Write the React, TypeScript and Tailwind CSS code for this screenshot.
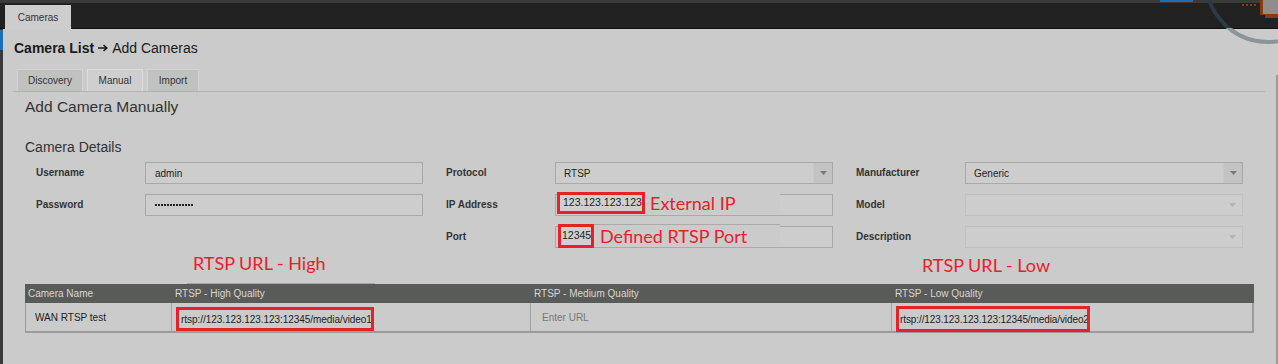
import React from "react";

function Arrow({ disabled }: { disabled?: boolean }) {
  return (
    <svg width="7" height="4" viewBox="0 0 7 4">
      <polygon points="0,0 7,0 3.5,4" fill={disabled ? "#b4b4b4" : "#7a7a7a"} />
    </svg>
  );
}

function Input({ value }: { value?: React.ReactNode }) {
  return (
    <div className="w-[278px] h-[22px] border border-[#a9a9a9] bg-[#cdcdcd] flex items-center pl-[9px] text-[10px] text-[#222]">
      {value}
    </div>
  );
}

function Select({ value, disabled }: { value?: string; disabled?: boolean }) {
  return (
    <div
      className={
        disabled
          ? "w-[278px] h-[22px] border border-[#c1c1c1] bg-[#cdcdcd] flex items-stretch"
          : "w-[278px] h-[22px] border border-[#a9a9a9] bg-[#cdcdcd] flex items-stretch"
      }
    >
      <div className="flex-1 flex items-center pl-[8px] text-[10px] text-[#222]">{value}</div>
      <div
        className={
          disabled
            ? "w-[19px] flex items-center justify-center"
            : "w-[19px] flex items-center justify-center bg-[#c3c3c3] border-l border-[#c9c9c9]"
        }
      >
        <Arrow disabled={disabled} />
      </div>
    </div>
  );
}

function Row({ label, children }: { label: string; children: React.ReactNode }) {
  return (
    <div className="flex items-center h-[22px]">
      <div className="w-[109px] text-[10px] font-bold text-[#333] -mt-[2px]">{label}</div>
      {children}
    </div>
  );
}

function Dots() {
  return (
    <div className="flex gap-[1px]">
      {Array.from({ length: 13 }).map((_, i) => (
        <div key={i} className="w-[2px] h-[2px] bg-[#222]" />
      ))}
    </div>
  );
}

function TitleArrow() {
  return (
    <svg width="10" height="8" viewBox="0 0 10 8" className="inline-block mx-[4px] align-[1px]">
      <path d="M0 4 H8.5 M5.5 1 L8.8 4 L5.5 7" fill="none" stroke="#1a1a1a" strokeWidth="1.6" />
    </svg>
  );
}

const note = "font-['Lato',sans-serif] text-[18px] leading-[20px] text-[#e8202a]";

export default function App() {
  return (
    <div className="relative w-[1278px] h-[364px] overflow-hidden bg-[#cbcbcb] font-['Liberation_Sans',Arial,sans-serif] text-[#222]">
      {/* top bar */}
      <div className="h-[29px] bg-[#212121] border-t-[3px] border-t-[#3a3a3a] border-b border-b-[#111111] flex items-end pl-[5px]">
        <div className="w-[66px] h-[24px] -mb-px bg-[#cdcdcd] text-[10px] text-[#333] flex items-center justify-center">
          Cameras
        </div>
      </div>

      <div className="flex h-[335px]">
        <div className="w-[3px] bg-[#3a3a3a] flex flex-col">
          <div className="mt-[1px] h-[20px] bg-[#1d6fb5]" />
        </div>

        <div className="flex-1 flex flex-col">
          {/* title */}
          <div className="mt-[11px] pl-[11px] text-[14px] leading-[16px] text-[#1a1a1a]">
            <span className="font-bold">Camera List</span>
            <TitleArrow />
            Add Cameras
          </div>

          {/* sub tabs */}
          <div className="mt-[13px] ml-[10px] mr-[11px] border-b border-[#b3b3b3] flex gap-[4px] pl-[4px]">
            <div className="w-[66px] h-[22px] bg-[#c0c2c0] border border-b-0 border-[#d3d3d3] text-[10px] text-[#333] flex items-center justify-center">
              Discovery
            </div>
            <div className="w-[56px] h-[22px] bg-[#cfcfcf] border border-b-0 border-[#dcdcdc] text-[10px] text-[#333] flex items-center justify-center">
              Manual
            </div>
            <div className="w-[52px] h-[22px] bg-[#c0c2c0] border border-b-0 border-[#d3d3d3] text-[10px] text-[#333] flex items-center justify-center">
              Import
            </div>
          </div>

          <div className="mt-[6px] pl-[22px] text-[15.5px] leading-[18px] text-[#333]">Add Camera Manually</div>
          <div className="mt-[23px] pl-[22px] text-[14px] leading-[16px] text-[#333]">Camera Details</div>

          {/* form */}
          <div className="mt-[7px] pl-[33px] flex gap-[23px]">
            <div className="flex flex-col gap-[10px]">
              <Row label="Username">
                <Input value="admin" />
              </Row>
              <Row label="Password">
                <Input value={<Dots />} />
              </Row>
            </div>
            <div className="flex flex-col gap-[10px]">
              <Row label="Protocol">
                <Select value="RTSP" />
              </Row>
              <Row label="IP Address">
                <Input />
              </Row>
              <Row label="Port">
                <Input />
              </Row>
            </div>
            <div className="flex flex-col gap-[10px]">
              <Row label="Manufacturer">
                <Select value="Generic" />
              </Row>
              <Row label="Model">
                <Select disabled />
              </Row>
              <Row label="Description">
                <Select disabled />
              </Row>
            </div>
          </div>

          {/* table */}
          <div className="mt-[36px] ml-[22px] w-[1229px]">
            <div className="flex h-[19px] bg-[#595b59] text-[10px] text-[#d6d6d6] items-center">
              <div className="w-[147px] pl-[3px]">Camera Name</div>
              <div className="w-[359px] pl-[3px]">RTSP - High Quality</div>
              <div className="w-[361px] pl-[3px]">RTSP - Medium Quality</div>
              <div className="w-[362px] pl-[3px]">RTSP - Low Quality</div>
            </div>
            <div className="flex h-[30px] border-l border-r-2 border-b-2 border-[#9b9b9b] text-[10px]">
              <div className="w-[146px] border-r border-[#a3a3a3] flex items-center pl-[9px] text-[#222]">WAN RTSP test</div>
              <div className="w-[359px] border-r border-[#a3a3a3] pl-[4px] pt-[4px]">
                <div className="w-[198px] h-[24px] border-[3px] border-[#e8202a] flex items-center pl-[2px] text-[10px] tracking-[-0.05px] whitespace-nowrap overflow-hidden text-[#222]">
                  rtsp://123.123.123.123:12345/media/video1
                </div>
              </div>
              <div className="w-[361px] border-r border-[#a3a3a3] flex items-center pl-[11px] text-[#777]">Enter URL</div>
              <div className="w-[360px] pl-[4px] pt-[3px]">
                <div className="w-[194px] h-[26px] border-[3px] border-[#e8202a] flex items-center pl-[1px] text-[10px] tracking-[-0.1px] whitespace-nowrap overflow-hidden text-[#222]">
                  rtsp://123.123.123.123:12345/media/video2
                </div>
              </div>
            </div>
          </div>
        </div>

        <div className="w-[2px] flex flex-col">
          <div className="h-[46px]" />
          <div className="flex-1 bg-[#9a9a9a]" />
        </div>
      </div>

      {/* annotations */}
      <div className="absolute left-[557px] top-[192px] w-[88px] h-[22px] border-[3px] border-[#e8202a] bg-[#d0d0d0] flex items-center pl-[3px] text-[10.5px] text-[#222]">
        123.123.123.123
      </div>
      <div className={"absolute left-[645px] top-[192px] w-[135px] h-[22px] bg-[#cbcbcb] flex items-center pl-[5px] " + note}>
        External IP
      </div>
      <div className="absolute left-[558px] top-[224px] w-[36px] h-[24px] border-[3px] border-[#e8202a] bg-[#d0d0d0] flex items-center pl-[1px] text-[10.5px] text-[#222] overflow-hidden">
        12345
      </div>
      <div className={"absolute left-[594px] top-[224px] w-[186px] h-[22px] bg-[#cbcbcb] border-t border-[#aaaaaa] flex items-center pl-[6px] " + note}>
        Defined RTSP Port
      </div>
      <div className={"absolute left-[187px] top-[252px] w-[188px] h-[32px] border-b border-[#a5a5a5] pl-[6px] pt-[1px] " + note}>
        RTSP URL - High
      </div>
      <div className={"absolute left-[922px] top-[255px] " + note}>RTSP URL - Low</div>

      {/* top-right decoration */}
      <svg className="absolute left-[1150px] top-0" width="128" height="60" viewBox="0 0 128 60">
        <defs>
          <clipPath id="cdark">
            <rect x="0" y="0" width="128" height="28" />
          </clipPath>
          <clipPath id="clight">
            <rect x="0" y="28" width="128" height="32" />
          </clipPath>
        </defs>
        <rect x="10" y="0" width="33" height="2" fill="#1d6fb5" />
        <circle cx="118" cy="-20" r="62" fill="none" stroke="#2b3a42" strokeWidth="4" clipPath="url(#cdark)" />
        <circle cx="118" cy="-20" r="62" fill="none" stroke="#8a9499" strokeWidth="4" clipPath="url(#clight)" />
        <rect x="92" y="4" width="2" height="2" fill="#8a3c12" />
        <rect x="96" y="4" width="2" height="2" fill="#8a3c12" />
        <rect x="100" y="4" width="2" height="2" fill="#8a3c12" />
        <rect x="104" y="4" width="2" height="2" fill="#8a3c12" />
        <rect x="110" y="0" width="18" height="18" fill="#8b3a10" />
        <rect x="113" y="0" width="15" height="14" fill="#8e8e8e" />
        <rect x="110" y="15" width="5" height="3" fill="#212121" />
      </svg>
    </div>
  );
}
